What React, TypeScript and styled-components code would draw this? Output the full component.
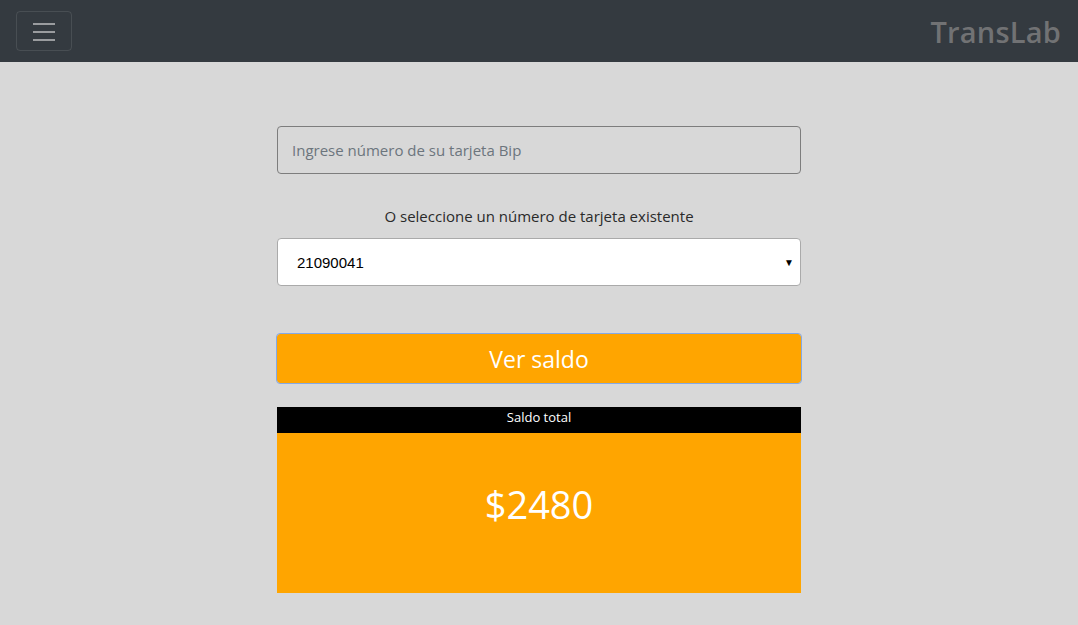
import React from "react";
import styled, { createGlobalStyle } from "styled-components";

const Global = createGlobalStyle`
  html, body { margin: 0; padding: 0; }
  body {
    background: #d8d8d8;
    font-family: "Open Sans", "Noto Sans", sans-serif;
    min-height: 625px;
  }
  * { box-sizing: border-box; }
`;

const Nav = styled.nav`
  height: 62px;
  background: #343a40;
  display: flex;
  align-items: center;
  justify-content: space-between;
  padding: 0 17px 0 16px;
`;

const Toggler = styled.button`
  width: 56px;
  height: 40px;
  border: 1px solid rgba(255, 255, 255, 0.1);
  border-radius: 4px;
  background: transparent;
  display: flex;
  align-items: center;
  justify-content: center;
  padding: 0;
`;

const Brand = styled.div`
  font-size: 29px;
  font-weight: 600;
  color: #717274;
  letter-spacing: 0.2px;
`;

const Main = styled.main`
  display: flex;
  justify-content: center;
  padding-top: 64px;
`;

const Column = styled.div`
  width: 524px;
  display: flex;
  flex-direction: column;
`;

const TextInput = styled.input`
  height: 48px;
  width: 100%;
  border: 1px solid #7d7d7d;
  border-radius: 4px;
  background: transparent;
  padding: 0 14px;
  font-family: inherit;
  font-size: 15px;
  color: #333;
  &::placeholder { color: #6c757d; }
`;

const Label = styled.div`
  margin-top: 31px;
  text-align: center;
  font-size: 15px;
  color: #2a2a2a;
  line-height: 22px;
`;

const SelectBox = styled.div`
  margin-top: 11px;
  height: 48px;
  background: #fff;
  border: 1px solid #aaa;
  border-radius: 4px;
  display: flex;
  align-items: center;
  justify-content: space-between;
  padding: 0 6px 0 19px;
  font-family: "Liberation Sans", Arial, sans-serif;
  font-size: 15px;
  color: #000;
`;

const Caret = styled.span`
  font-size: 10px;
  color: #000;
`;

const ActionButton = styled.button`
  margin-top: 48px;
  height: 49px;
  width: 100%;
  background: #ffa500;
  border: 1px solid #ffa500;
  outline: 1px solid #84a9e6;
  border-radius: 3px;
  color: #fff;
  font-family: inherit;
  font-size: 23px;
`;

const Result = styled.section`
  margin-top: 24px;
  display: flex;
  flex-direction: column;
`;

const ResultHeader = styled.div`
  height: 26px;
  background: #000;
  color: #fff;
  text-align: center;
  font-size: 13px;
  line-height: 20px;
`;

const ResultBody = styled.div`
  height: 160px;
  background: #ffa500;
  color: #fff;
  display: flex;
  align-items: center;
  justify-content: center;
  font-size: 38px;
  padding-bottom: 18px;
`;

export default function App() {
  return (
    <>
      <Global />
      <Nav>
        <Toggler aria-label="menu">
          <svg width="26" height="20" viewBox="0 0 26 20">
            <g stroke="#9a9c9f" strokeWidth="2">
              <line x1="2" y1="3" x2="24" y2="3" />
              <line x1="2" y1="11" x2="24" y2="11" />
              <line x1="2" y1="19" x2="24" y2="19" />
            </g>
          </svg>
        </Toggler>
        <Brand>TransLab</Brand>
      </Nav>
      <Main>
        <Column>
          <TextInput placeholder="Ingrese número de su tarjeta Bip" />
          <Label>O seleccione un número de tarjeta existente</Label>
          <SelectBox>
            <span>21090041</span>
            <Caret>▼</Caret>
          </SelectBox>
          <ActionButton>Ver saldo</ActionButton>
          <Result>
            <ResultHeader>Saldo total</ResultHeader>
            <ResultBody>$2480</ResultBody>
          </Result>
        </Column>
      </Main>
    </>
  );
}
